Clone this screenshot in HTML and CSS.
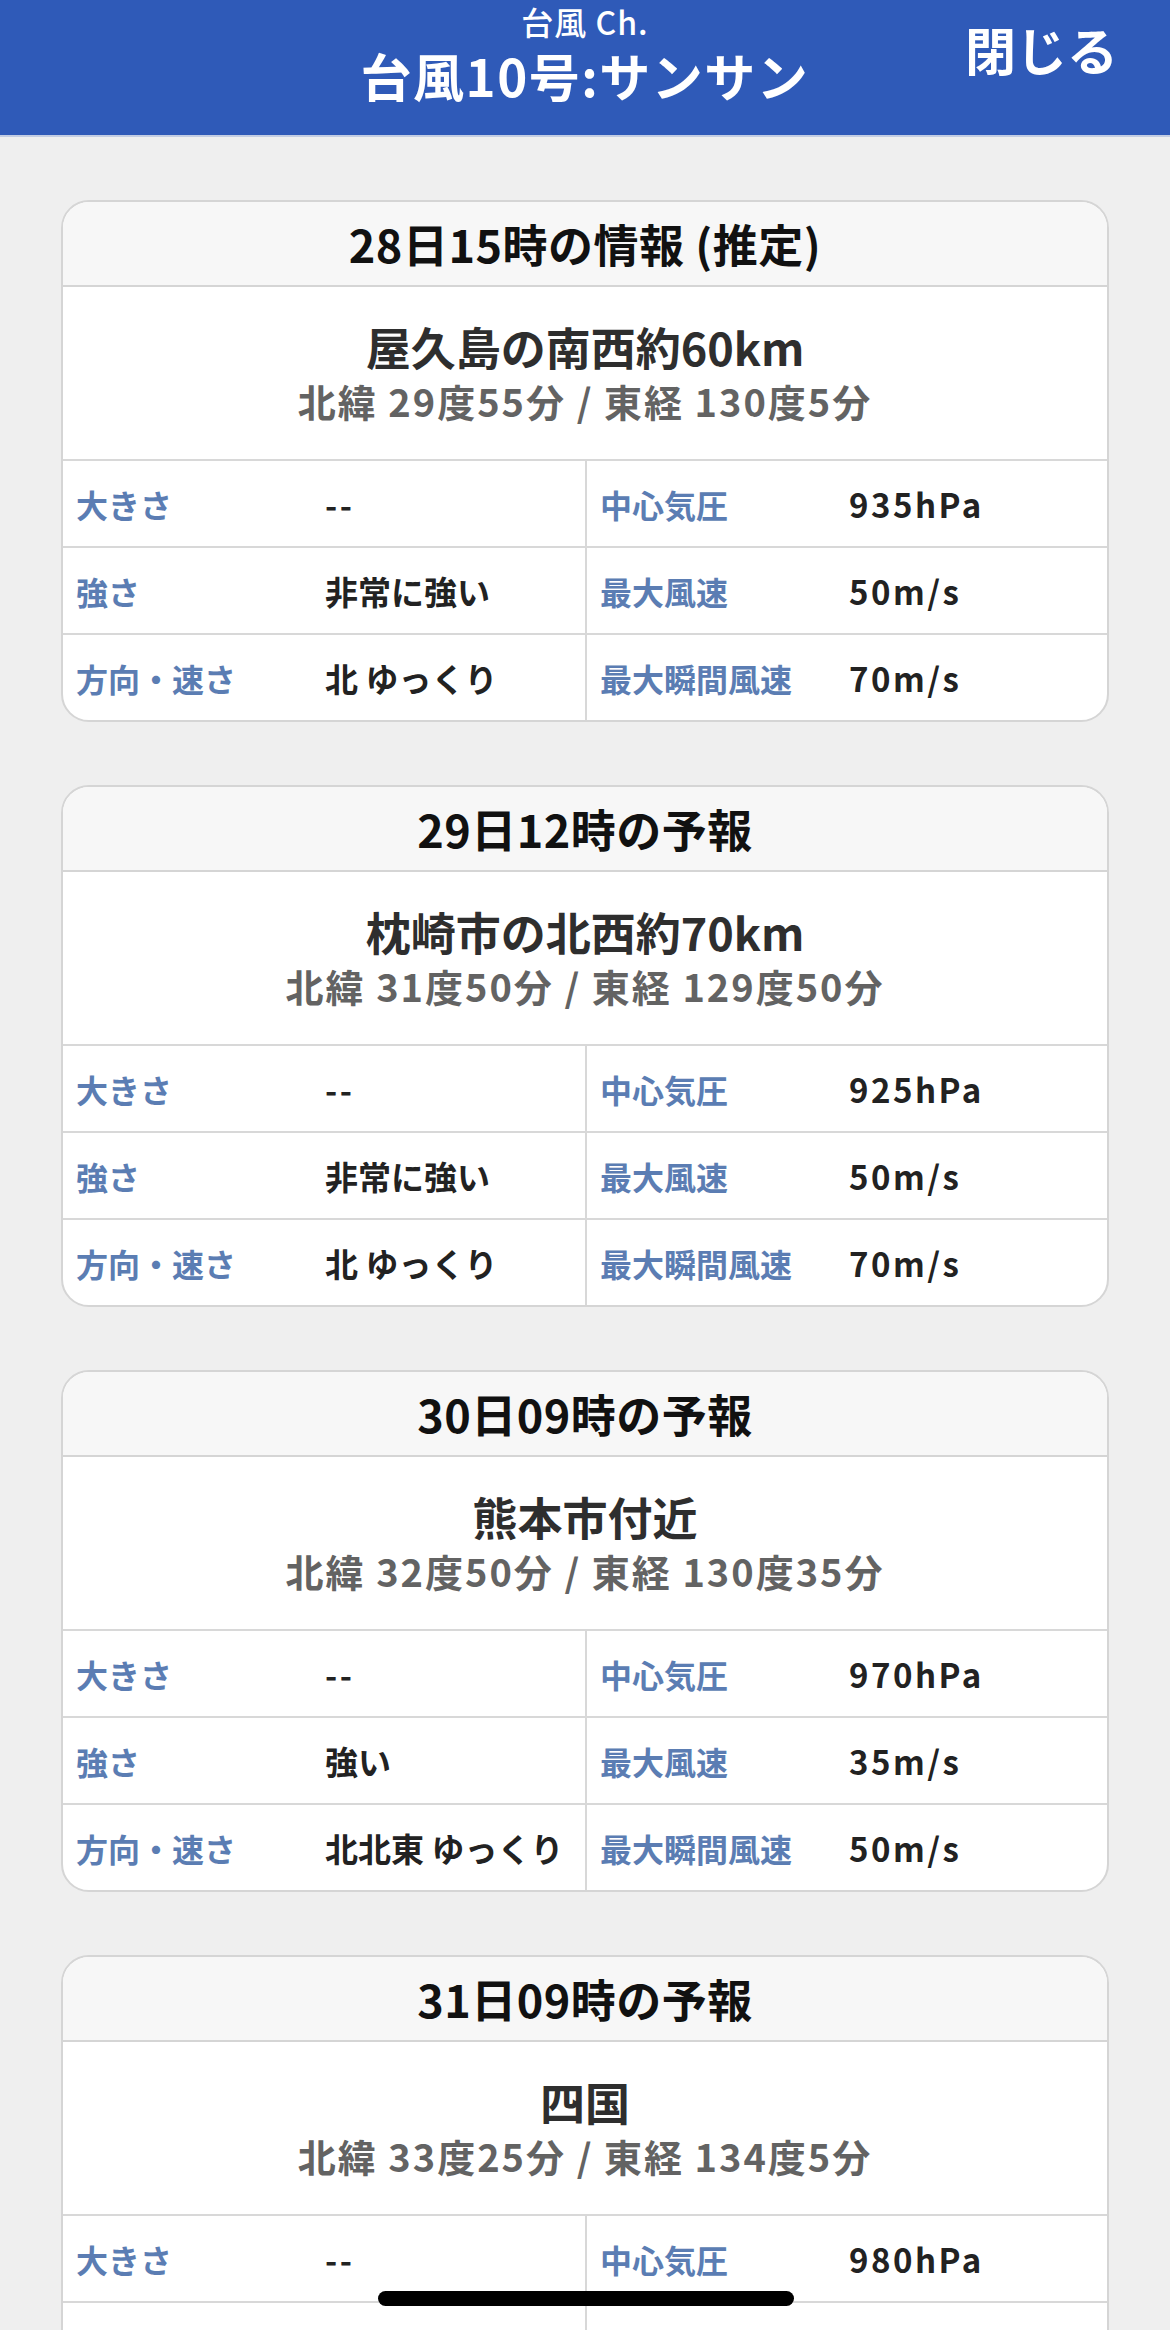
FILE: index.html
```html
<!DOCTYPE html>
<html lang="ja">
<head>
<meta charset="utf-8">
<title>台風 Ch.</title>
<link rel="stylesheet" href="styles.css">
</head>
<body>
<div class="screen">
  <header class="topbar">
    <div class="topbar-spacer"></div>
    <div class="topbar-titles">
      <div class="topbar-sub">台風 Ch.</div>
      <div class="topbar-title">台風10号:サンサン</div>
    </div>
    <div class="topbar-close">閉じる</div>
  </header>

  <main class="list">
    <section class="card">
      <div class="card-head">28日15時の情報 (推定)</div>
      <div class="card-loc">
        <div class="loc-name">屋久島の南西約60km</div>
        <div class="loc-coord">北緯 29度55分 / 東経 130度5分</div>
      </div>
      <div class="row">
        <div class="cell"><span class="label">大きさ</span><span class="value num">--</span></div>
        <div class="cell"><span class="label">中心気圧</span><span class="value num">935hPa</span></div>
      </div>
      <div class="row">
        <div class="cell"><span class="label">強さ</span><span class="value">非常に強い</span></div>
        <div class="cell"><span class="label">最大風速</span><span class="value num">50m/s</span></div>
      </div>
      <div class="row">
        <div class="cell"><span class="label">方向・速さ</span><span class="value">北 ゆっくり</span></div>
        <div class="cell"><span class="label">最大瞬間風速</span><span class="value num">70m/s</span></div>
      </div>
    </section>

    <section class="card">
      <div class="card-head">29日12時の予報</div>
      <div class="card-loc">
        <div class="loc-name">枕崎市の北西約70km</div>
        <div class="loc-coord">北緯 31度50分 / 東経 129度50分</div>
      </div>
      <div class="row">
        <div class="cell"><span class="label">大きさ</span><span class="value num">--</span></div>
        <div class="cell"><span class="label">中心気圧</span><span class="value num">925hPa</span></div>
      </div>
      <div class="row">
        <div class="cell"><span class="label">強さ</span><span class="value">非常に強い</span></div>
        <div class="cell"><span class="label">最大風速</span><span class="value num">50m/s</span></div>
      </div>
      <div class="row">
        <div class="cell"><span class="label">方向・速さ</span><span class="value">北 ゆっくり</span></div>
        <div class="cell"><span class="label">最大瞬間風速</span><span class="value num">70m/s</span></div>
      </div>
    </section>

    <section class="card">
      <div class="card-head">30日09時の予報</div>
      <div class="card-loc">
        <div class="loc-name">熊本市付近</div>
        <div class="loc-coord">北緯 32度50分 / 東経 130度35分</div>
      </div>
      <div class="row">
        <div class="cell"><span class="label">大きさ</span><span class="value num">--</span></div>
        <div class="cell"><span class="label">中心気圧</span><span class="value num">970hPa</span></div>
      </div>
      <div class="row">
        <div class="cell"><span class="label">強さ</span><span class="value">強い</span></div>
        <div class="cell"><span class="label">最大風速</span><span class="value num">35m/s</span></div>
      </div>
      <div class="row">
        <div class="cell"><span class="label">方向・速さ</span><span class="value">北北東 ゆっくり</span></div>
        <div class="cell"><span class="label">最大瞬間風速</span><span class="value num">50m/s</span></div>
      </div>
    </section>

    <section class="card">
      <div class="card-head">31日09時の予報</div>
      <div class="card-loc">
        <div class="loc-name">四国</div>
        <div class="loc-coord">北緯 33度25分 / 東経 134度5分</div>
      </div>
      <div class="row">
        <div class="cell"><span class="label">大きさ</span><span class="value num">--</span></div>
        <div class="cell"><span class="label">中心気圧</span><span class="value num">980hPa</span></div>
      </div>
      <div class="row">
        <div class="cell"></div>
        <div class="cell"></div>
      </div>
    </section>
  </main>

  <div class="home-indicator"></div>
</div>
</body>
</html>
```

FILE: styles.css
```css
html, body {
  margin: 0;
  padding: 0;
}

body {
  background: #efefef;
  font-family: "Noto Sans CJK JP", "Noto Sans", sans-serif;
}

.screen {
  height: 2330px;
  overflow: hidden;
  background: #efefef;
}

.topbar {
  height: 135px;
  background: #2f5ab8;
  border-bottom: 2px solid #c3cde3;
  display: grid;
  grid-template-columns: 1fr auto 1fr;
  align-items: start;
  color: #ffffff;
}

.topbar-titles {
  display: flex;
  flex-direction: column;
  align-items: center;
  padding-top: 4px;
}

.topbar-sub {
  font-size: 32px;
  line-height: 34px;
  font-weight: 500;
  letter-spacing: 1px;
}

.topbar-title {
  font-size: 51px;
  line-height: 56px;
  font-weight: 700;
  letter-spacing: 1.5px;
  margin-top: 9px;
}

.topbar-close {
  justify-self: end;
  font-size: 51px;
  line-height: 56px;
  font-weight: 700;
  margin-top: 21px;
  margin-right: 52px;
}

.list {
  display: flex;
  flex-direction: column;
  gap: 63px;
  padding: 63px 61px 0;
}

.card {
  background: #ffffff;
  border: 2px solid #d5d5d5;
  border-radius: 28px;
  overflow: hidden;
}

.card-head {
  height: 83px;
  background: #f7f7f7;
  border-bottom: 2px solid #d5d5d5;
  display: flex;
  align-items: center;
  justify-content: center;
  font-size: 45px;
  font-weight: 700;
  color: #111111;
  letter-spacing: 0.5px;
}

.card-loc {
  height: 172px;
  display: flex;
  flex-direction: column;
  align-items: center;
  justify-content: center;
  gap: 6px;
}

.loc-name {
  font-size: 45px;
  line-height: 50px;
  font-weight: 700;
  color: #2e2e2e;
}

.loc-coord {
  font-size: 38px;
  line-height: 46px;
  font-weight: 700;
  color: #636363;
  letter-spacing: 2px;
}

.row {
  display: grid;
  grid-template-columns: 1fr 1fr;
  height: 85px;
  border-top: 2px solid #d8d8d8;
}

.cell {
  display: grid;
  grid-template-columns: 249px 1fr;
  align-items: center;
  padding-left: 13px;
}

.cell + .cell {
  border-left: 2px solid #d8d8d8;
}

.label {
  font-size: 32px;
  font-weight: 700;
  color: #5b7db3;
  white-space: nowrap;
}

.value {
  font-size: 33px;
  font-weight: 700;
  color: #222222;
  white-space: nowrap;
}

.value.num {
  letter-spacing: 2.5px;
}

.home-indicator {
  position: fixed;
  left: 378px;
  bottom: 24px;
  width: 416px;
  height: 15px;
  border-radius: 8px;
  background: #000000;
}
```
